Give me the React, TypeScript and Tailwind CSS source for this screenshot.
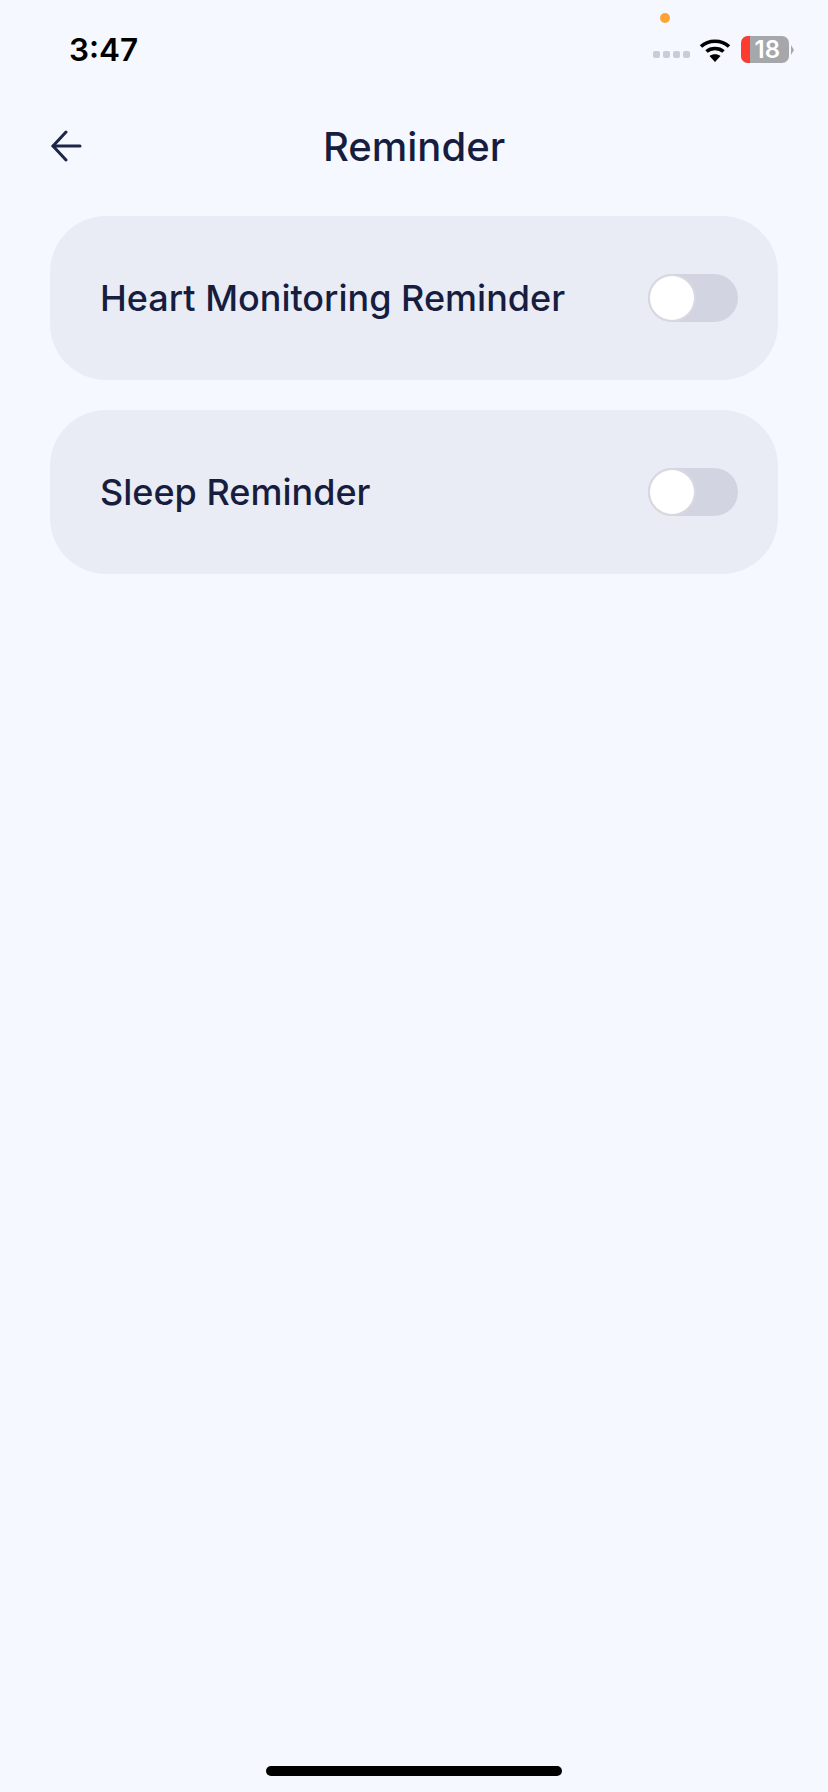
import React from 'react';

const ReminderRow = ({ label }: { label: string }) => (
  <div className="flex h-[164px] items-center justify-between rounded-[56px] bg-[#e9ecf5] pl-[50px] pr-[40px]">
    <span className="text-[36px] font-medium leading-[44px] text-[#171d3f]">{label}</span>
    <div className="flex h-[48px] w-[90px] items-center rounded-full bg-[#d2d5e1] p-[2px]">
      <div className="h-[44px] w-[44px] rounded-full bg-white shadow-[0_0_0_2px_#d8d8e0]" />
    </div>
  </div>
);

const StatusBar = () => (
  <div className="relative flex h-[116px] items-start justify-between pl-[69px] pr-[34px] pt-[30px]">
    <span className="text-[31.5px] font-semibold leading-[40px] text-black">3:47</span>
    <div className="absolute left-[660px] top-[13px] h-[10px] w-[10px] rounded-full bg-[#ffa235]" />
    <div className="mt-[6px] flex items-center">
      <div className="mt-[9px] flex gap-[3px]">
        <div className="h-[7px] w-[7px] rounded-[2px] bg-[#c9ccd6]" />
        <div className="h-[7px] w-[7px] rounded-[2px] bg-[#c9ccd6]" />
        <div className="h-[7px] w-[7px] rounded-[2px] bg-[#c9ccd6]" />
        <div className="h-[7px] w-[7px] rounded-[2px] bg-[#c9ccd6]" />
      </div>
      <svg className="ml-[9px]" width="32" height="24" viewBox="0 0 32 24">
        <path d="M2 8.5C9.5 1.5 22.500 1.500 30 8.500" fill="none" stroke="#000" strokeWidth="3.600" />
        <path d="M7.500 13.500C12 9.500 20 9.500 24.500 13.500" fill="none" stroke="#000" strokeWidth="3.600" />
        <path d="M16 24L10.500 18C13.500 15.500 18.500 15.500 21.500 18Z" fill="#000" />
      </svg>
      <div className="relative ml-[10px] flex h-[27px] w-[48px] items-center justify-end overflow-hidden rounded-[7px] bg-[#a6a7ab] pr-[9px]">
        <div className="absolute left-0 top-0 h-full w-[9px] bg-[#ff3b30]" />
        <span className="text-[24px] font-semibold leading-[27px] text-white">18</span>
      </div>
      <svg className="ml-[2px]" width="3" height="10" viewBox="0 0 3 10">
        <path d="M0 0L3 5L0 10Z" fill="#a6a7ab" />
      </svg>
    </div>
  </div>
);

export default function App() {
  return (
    <div className="relative h-[1792px] w-[828px] overflow-hidden bg-[#f5f8ff] font-['Inter',sans-serif]">
      <StatusBar />
      <div className="relative flex h-[60px] items-center justify-center">
        <svg className="absolute left-[50px] top-[14px]" width="32" height="32" viewBox="0 0 32 32" fill="none" stroke="#1d2548" strokeWidth="3" strokeLinecap="round" strokeLinejoin="round">
          <path d="M30 16H3" />
          <path d="M16 2L3 16L16 30" />
        </svg>
        <h1 className="mt-[2px] text-[40px] font-medium leading-[48px] text-[#171d3f]">Reminder</h1>
      </div>
      <div className="mx-[50px] mt-[40px] flex flex-col gap-[30px]">
        <ReminderRow label="Heart Monitoring Reminder" />
        <ReminderRow label="Sleep Reminder" />
      </div>
      <div className="absolute bottom-[16px] left-[266px] h-[10px] w-[296px] rounded-full bg-black" />
    </div>
  );
}
